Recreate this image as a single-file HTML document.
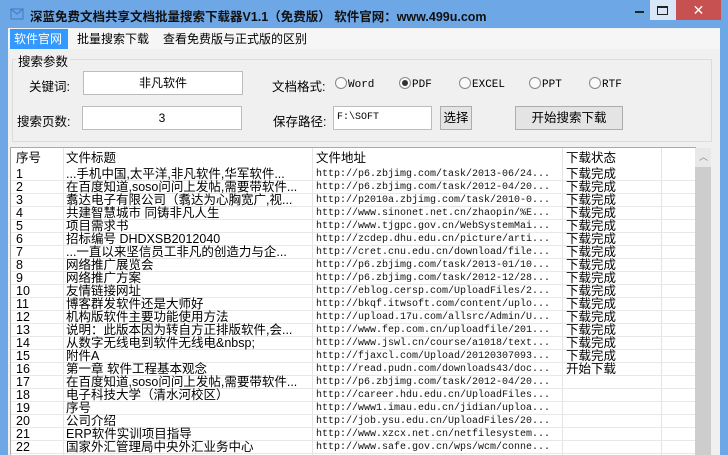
<!DOCTYPE html>
<html><head><meta charset="utf-8"><style>
*{margin:0;padding:0;box-sizing:border-box}
html,body{width:728px;height:455px;overflow:hidden}
body{background:#6ea7e6;font-family:"Liberation Sans","Noto Sans CJK SC",sans-serif;font-size:12px;color:#000;position:relative}
.abs{position:absolute}
#title{left:30px;top:6px;font-weight:bold;font-size:12.5px;color:#111}
#client{left:8px;top:28px;width:712px;height:427px;background:#f0f0f0}
.menu{top:29px;height:20px;line-height:20px;font-size:12px;padding:0 4px}
.lbl{font-size:12.5px}
.inp{background:#fff;border:1px solid #bcbcbc;text-align:center;height:24px;line-height:22px;font-size:12px}
.btn{background:#e4e4e4;border:1px solid #adadad;text-align:center;height:24px;line-height:22px;font-size:12.5px}
.rad{font-family:"Liberation Mono",monospace;font-size:11px;line-height:14px}
.rad i{display:inline-block;width:12px;height:12px;border:1px solid #888;border-radius:50%;vertical-align:-2px;margin-right:1px;background:#fafafa;position:relative}
.rad i.on::after{content:"";position:absolute;left:2px;top:2px;width:6px;height:6px;border-radius:50%;background:#333}
#tbl{left:10px;top:147px;width:686px;height:308px;background:#fff;border-top:1px solid #aaa;border-left:1px solid #aaa;overflow:hidden}
.row{position:absolute;left:0;width:686px;height:13px;border-bottom:1px solid #e8e8e8;line-height:13px;font-size:12.5px;white-space:nowrap}
.row span{position:absolute;top:0}
.u{font-family:"Liberation Mono",monospace;font-size:10px;color:#111}
.vl{position:absolute;top:0;width:1px;height:308px;background:#e4e4e4}
</style></head><body>
<svg class="abs" style="left:10px;top:8px" width="14" height="12"><rect x="1" y="1" width="12" height="10" fill="none" stroke="#3d78c8"/><path d="M1 1 L7 6 L13 1" fill="none" stroke="#3d78c8"/></svg>
<div id="title" class="abs">深蓝免费文档共享文档批量搜索下载器V1.1（免费版）&nbsp;软件官网：www.499u.com</div>
<div class="abs" style="left:635px;top:11px;width:9px;height:2px;background:#222"></div>
<div class="abs" style="left:650px;top:0;width:26px;height:20px;background:#d8e6f6"></div>
<div class="abs" style="left:657px;top:6px;width:11px;height:9px;border:1px solid #222;border-top-width:2px"></div>
<div class="abs" style="left:676px;top:0;width:45px;height:20px;background:#c75050;color:#fff;text-align:center;font-size:14px;line-height:20px">✕</div>
<div id="client" class="abs"></div>
<div class="abs" style="left:8px;top:29px;width:712px;height:20px;background:#f6f6f6"></div>
<div class="abs menu" style="left:10px;background:#3399ff;color:#fff;width:58px">软件官网</div>
<div class="abs menu" style="left:73px">批量搜索下载</div>
<div class="abs menu" style="left:159px">查看免费版与正式版的区别</div>
<div class="abs" style="left:12px;top:59px;width:700px;height:83px;border:1px solid #dcdcdc"></div>
<div class="abs lbl" style="left:16px;top:51px;background:#f0f0f0;padding:0 2px">搜索参数</div>
<div class="abs lbl" style="left:29px;top:76px">关键词:</div>
<div class="abs inp" style="left:83px;top:71px;width:160px">非凡软件</div>
<div class="abs lbl" style="left:17px;top:111px">搜索页数:</div>
<div class="abs inp" style="left:82px;top:106px;width:160px">3</div>
<div class="abs lbl" style="left:272px;top:76px">文档格式:</div>
<div class="abs rad" style="left:335px;top:77px"><i></i>Word</div>
<div class="abs rad" style="left:399px;top:77px"><i class="on"></i>PDF</div>
<div class="abs rad" style="left:459px;top:77px"><i></i>EXCEL</div>
<div class="abs rad" style="left:529px;top:77px"><i></i>PPT</div>
<div class="abs rad" style="left:589px;top:77px"><i></i>RTF</div>
<div class="abs lbl" style="left:273px;top:111px">保存路径:</div>
<div class="abs inp" style="left:333px;top:106px;width:99px;text-align:left;padding-left:3px;font-family:'Liberation Mono',monospace;font-size:10px">F:\SOFT</div>
<div class="abs btn" style="left:440px;top:106px;width:32px">选择</div>
<div class="abs btn" style="left:515px;top:106px;width:108px">开始搜索下载</div>
<div id="tbl" class="abs">
<div class="vl" style="left:52px"></div><div class="vl" style="left:301px"></div><div class="vl" style="left:551px"></div><div class="vl" style="left:650px"></div>
<div class="row" style="top:2px;height:17px;line-height:17px;border-bottom:none"><span style="left:5px">序号</span><span style="left:55px">文件标题</span><span style="left:305px">文件地址</span><span style="left:555px">下载状态</span></div>
</div>
<div class="abs" style="left:695px;top:148px;width:16px;height:307px;background:#e8e8e8"></div>
<div class="abs" style="left:695px;top:167px;width:16px;height:288px;background:#cdcdcd"></div>
<div class="abs" style="left:699px;top:150px;font-size:9px;color:#888">︿</div>
<script>
var d=[["...手机中国,太平洋,非凡软件,华军软件...","http://p6.zbjimg.com/task/2013-06/24...","下载完成"],
["在百度知道,soso问问上发帖,需要带软件...","http://p6.zbjimg.com/task/2012-04/20...","下载完成"],
["翥达电子有限公司（翥达为心胸宽广,视...","http://p2010a.zbjimg.com/task/2010-0...","下载完成"],
["共建智慧城市 同铸非凡人生","http://www.sinonet.net.cn/zhaopin/%E...","下载完成"],
["项目需求书","http://www.tjgpc.gov.cn/WebSystemMai...","下载完成"],
["招标编号 DHDXSB2012040","http://zcdep.dhu.edu.cn/picture/arti...","下载完成"],
["...一直以来坚信员工非凡的创造力与企...","http://cret.cnu.edu.cn/download/file...","下载完成"],
["网络推广展览会","http://p6.zbjimg.com/task/2013-01/10...","下载完成"],
["网络推广方案","http://p6.zbjimg.com/task/2012-12/28...","下载完成"],
["友情链接网址","http://eblog.cersp.com/UploadFiles/2...","下载完成"],
["博客群发软件还是大师好","http://bkqf.itwsoft.com/content/uplo...","下载完成"],
["机构版软件主要功能使用方法","http://upload.17u.com/allsrc/Admin/U...","下载完成"],
["说明：此版本因为转自方正排版软件,会...","http://www.fep.com.cn/uploadfile/201...","下载完成"],
["从数字无线电到软件无线电&amp;nbsp;","http://www.jswl.cn/course/a1018/text...","下载完成"],
["附件A","http://fjaxcl.com/Upload/20120307093...","下载完成"],
["第一章 软件工程基本观念","http://read.pudn.com/downloads43/doc...","开始下载"],
["在百度知道,soso问问上发帖,需要带软件...","http://p6.zbjimg.com/task/2012-04/20...",""],
["电子科技大学（清水河校区）","http://career.hdu.edu.cn/UploadFiles...",""],
["序号","http://www1.imau.edu.cn/jidian/uploa...",""],
["公司介绍","http://job.ysu.edu.cn/UploadFiles/20...",""],
["ERP软件实训项目指导","http://www.xzcx.net.cn/netfilesystem...",""],
["国家外汇管理局中央外汇业务中心","http://www.safe.gov.cn/wps/wcm/conne...",""]];
var h="";for(var i=0;i<d.length;i++){h+='<div class="row" style="top:'+(20+i*13)+'px"><span style="left:5px">'+(i+1)+'</span><span style="left:55px">'+d[i][0]+'</span><span class="u" style="left:305px">'+d[i][1]+'</span><span style="left:555px">'+d[i][2]+'</span></div>';}
document.getElementById("tbl").insertAdjacentHTML("beforeend",h);
</script>
</body></html>
